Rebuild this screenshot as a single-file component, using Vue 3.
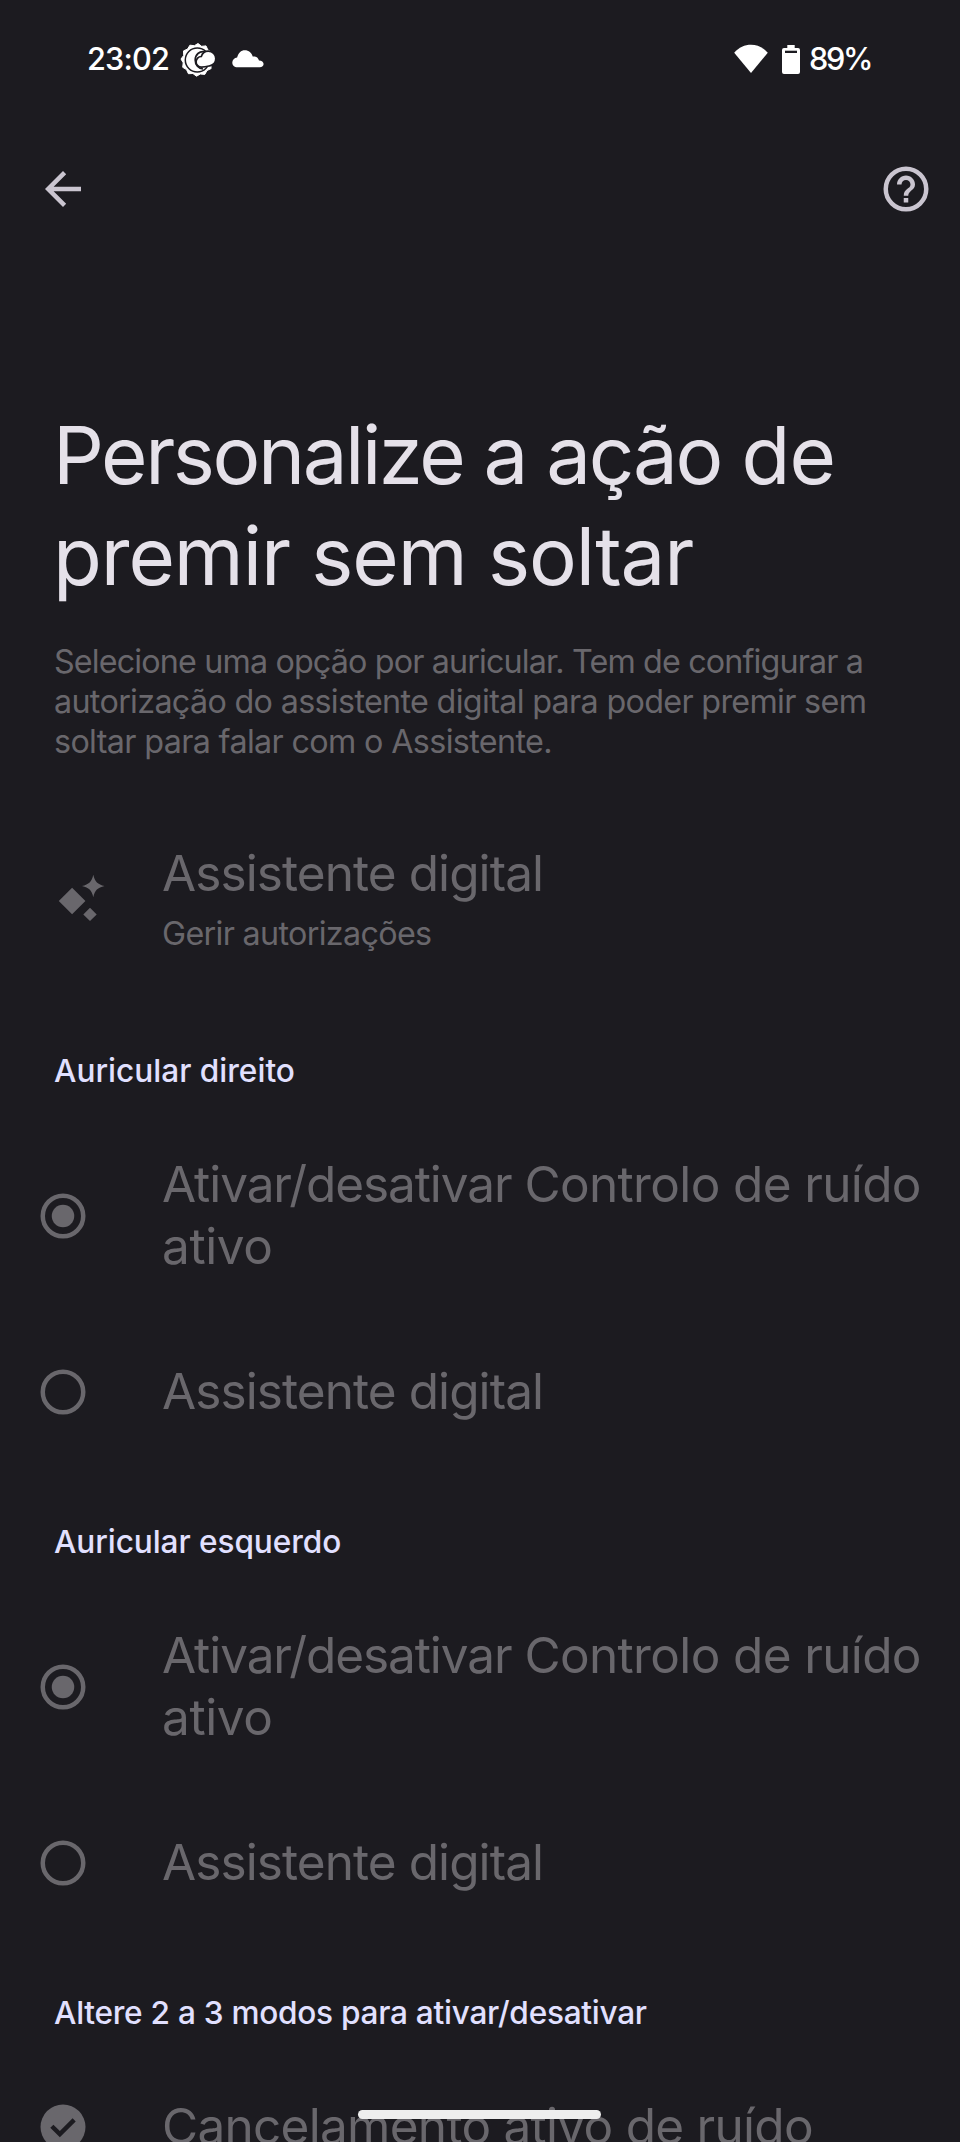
<script setup>
const one = (text, track) => [{ text, track }]
const title = [
  [{ text: 'Personalize ', track: -2.43 }, { text: 'a ação ', track: -2.2 }, { text: 'de', track: -0.8 }],
  one('premir sem soltar', -1.08),
]
const intro = [
  one('Selecione uma opção por auricular. Tem de configurar a', -0.86),
  one('autorização do assistente digital para poder premir sem', -0.68),
  one('soltar para falar com o Assistente.', -0.65),
]
const options = () => [
  {
    checked: true,
    lines: [
      [{ text: 'Ativar/desativar ', track: -1.08 }, { text: 'Controlo de ruído', track: -0.64 }],
      one('ativo', -0.4),
    ],
  },
  { checked: false, lines: [one('Assistente digital', -0.92)] },
]
const groups = [
  { name: 'Auricular direito', track: 0, options: options() },
  { name: 'Auricular esquerdo', track: -0.08, options: options() },
]
const tracking = (part) => ({ letterSpacing: part.track + 'px' })
</script>

<template>
  <div class="screen">
    <header class="status">
      <span class="clock">23:02</span>
      <svg class="weather" viewBox="0 0 36 36">
        <path fill="#fff" stroke="#fff" stroke-width="1" stroke-linejoin="round" d="M18 1.500 21.600 4.300 26 3.900 27.900 8 31.800 10.200 31.300 14.700 33.500 18.500 30.800 22.100 31.100 26.600 27 28.500 24.800 32.400 20.300 32 16.500 34.200 12.900 31.500 8.400 31.700 6.500 27.600 2.700 25.300 3.200 20.800 1 17 3.700 13.400 3.500 8.900 7.600 7 9.900 3.200 14.400 3.700Z" />
        <circle cx="17.300" cy="18" r="12" fill="none" stroke="#1c1b20" stroke-width="1.500" />
        <path fill="none" stroke="#1c1b20" stroke-width="1.700" d="M24.500 9.800c-5-1-9.300 2.800-9.300 8.200 0 5 3.300 8.700 7.800 9" />
        <path fill="#fff" stroke="#1c1b20" stroke-width="1.700" d="M21.500 25.100a5.300 5.300 0 0 1-.2-10.600c1-3.300 3.600-5.300 7-5.300 4.300 0 7.500 3.300 7.500 7.300s-2.700 6.500-6 7.300c-2 .5-4.300 1.300-8.300 1.300z" />
      </svg>
      <svg class="cloud" viewBox="0 0 32 18">
        <path fill="#fff" d="M5.500 17.300C2.300 17.300.3 15.300.3 12.500c0-2.700 2-4.600 4.800-5C6.300 2.800 9 .2 12.800.2c3.900 0 7 2.500 7.900 6.300 3-.6 5.700 1 6.300 4 2.700.2 4.600 1.500 4.600 3.600 0 2-1.500 3.200-3.900 3.200z" />
      </svg>
      <span class="spring"></span>
      <svg class="wifi" viewBox="0 0 34 30">
        <path fill="#fff" d="M17 29 L.2 8.800 C5 3.400 10.700.8 17 .8 S29 3.400 33.800 8.800Z" />
      </svg>
      <svg class="battery" viewBox="0 0 18 29">
        <path fill="#fff" d="M5.300 0h7.400v3H16a2 2 0 0 1 2 2v22a2 2 0 0 1-2 2H2a2 2 0 0 1-2-2V5a2 2 0 0 1 2-2h3.300z" />
        <path fill="#1c1b20" d="M3 5.700h12v2.300H3z" />
      </svg>
      <span class="percent">89%</span>
    </header>

    <nav class="bar">
      <svg class="icon" viewBox="0 0 24 24"><path fill="currentColor" d="M20 11H7.830l5.590-5.590L12 4l-8 8 8 8 1.410-1.410L7.830 13H20z" /></svg>
      <svg class="icon" viewBox="0 0 24 24">
        <circle cx="12" cy="12" r="9" fill="none" stroke="currentColor" stroke-width="2" />
        <path fill="currentColor" d="M11 16h2v2h-2zM12 6c-2.210 0-4 1.790-4 4h2c0-1.100.9-2 2-2s2 .9 2 2c0 2-3 1.750-3 5h2c0-2.250 3-2.500 3-5 0-2.210-1.790-4-4-4z" />
      </svg>
    </nav>

    <h1 class="title">
      <span v-for="(l, i) in title" :key="i" class="line"><span v-for="p in l" :key="p.text" :style="tracking(p)">{{ p.text }}</span></span>
    </h1>
    <p class="intro">
      <span v-for="(l, i) in intro" :key="i" class="line"><span v-for="p in l" :key="p.text" :style="tracking(p)">{{ p.text }}</span></span>
    </p>

    <div class="row assistant">
      <svg class="spark" viewBox="0 0 54 54">
        <path fill="currentColor" d="M14.100 15.700 27.400 29 14.100 42.300.8 29zM32 35.700l6.700 6.700L32 49.100l-6.700-6.700zM35.300 2.700c1.600 7 4.300 9.700 11.300 11.300-7 1.600-9.700 4.300-11.300 11.300-1.600-7-4.300-9.700-11.300-11.300 7-1.600 9.700-4.300 11.300-11.300z" />
      </svg>
      <div class="label">
        <span class="line assistant-name">Assistente digital</span>
        <span class="line assistant-sub">Gerir autorizações</span>
      </div>
    </div>

    <section v-for="g in groups" :key="g.name" class="group">
      <h2 class="heading" :style="tracking(g)">{{ g.name }}</h2>
      <div v-for="(o, i) in g.options" :key="i" class="row option">
        <svg class="icon" viewBox="0 0 24 24">
          <circle cx="12" cy="12" r="9" fill="none" stroke="currentColor" stroke-width="2" />
          <circle v-if="o.checked" cx="12" cy="12" r="5" fill="currentColor" />
        </svg>
        <div class="label">
          <span v-for="(l, n) in o.lines" :key="n" class="line"><span v-for="p in l" :key="p.text" :style="tracking(p)">{{ p.text }}</span></span>
        </div>
      </div>
    </section>

    <section class="group">
      <h2 class="heading modes">Altere 2 a 3 modos para ativar/desativar</h2>
      <div class="row option">
        <svg class="icon" viewBox="0 0 24 24">
          <circle cx="12" cy="12" r="10" fill="currentColor" />
          <path fill="#1c1b20" d="m10.600 16.600 7.050-7.050-1.400-1.400-5.650 5.650-2.850-2.850-1.400 1.400z" />
        </svg>
        <div class="label"><span class="line cancel">Cancelamento ativo de ruído</span></div>
      </div>
    </section>

    <div class="home"></div>
  </div>
</template>

<style>
html, body { background: #1c1b20; }
</style>

<style scoped>
.screen {
  position: relative;
  width: 960px;
  height: 2142px;
  overflow: hidden;
  background: #1c1b20;
  color: #69676c;
  font-family: Inter, Roboto, "Liberation Sans", sans-serif;
}
.line { display: block; white-space: pre; }
.label { margin: -1px 0 1px; }
.status {
  display: flex;
  align-items: center;
  height: 118px;
  box-sizing: border-box;
  padding: 0 88px;
  color: #fff;
  font-size: 30.700px;
  font-weight: 500;
}
.clock { width: 93px; margin: -1px 0 0 -1px; letter-spacing: -0.800px; }
.weather { width: 36px; height: 36px; margin-top: 1px; }
.cloud { width: 32px; height: 18px; margin-left: 16px; }
.spring { flex: 1; }
.wifi { width: 34px; height: 30px; margin-right: 14px; }
.battery { width: 18px; height: 29px; margin-right: 9px; }
.percent { width: 63px; margin-top: -1px; letter-spacing: -2.300px; white-space: nowrap; }
.bar {
  display: flex;
  justify-content: space-between;
  padding: 44px 27px 0 36px;
  color: #cac5d0;
}
.icon { width: 54px; height: 54px; flex: none; display: block; }
.title {
  margin: 189px 0 0 53px;
  color: #e5e1e9;
  font-size: 79.800px;
  line-height: 101px;
  font-weight: 400;
}
.intro { margin: 35px 0 0 54px; font-size: 32.300px; line-height: 40px; }
.row { display: flex; align-items: center; }
.assistant { margin-top: 81px; padding-left: 58px; }
.spark { width: 54px; height: 54px; margin-right: 50px; flex: none; }
.assistant-name { font-size: 49.500px; line-height: 62px; letter-spacing: -0.920px; }
.assistant-sub { margin-top: 10px; font-size: 32.300px; line-height: 40px; letter-spacing: -0.680px; }
.assistant .label { margin-bottom: 0; }
.group { margin-top: 99px; }
.assistant + .group { margin-top: 97px; }
.heading {
  margin: 0 0 63px 54px;
  color: #e1e0ff;
  font-size: 31.600px;
  line-height: 40px;
  font-weight: 500;
  white-space: nowrap;
}
.modes { letter-spacing: -0.270px; }
.option { padding-left: 36px; gap: 72px; font-size: 49.500px; line-height: 62px; }
.option + .option { margin-top: 83px; }
.cancel { letter-spacing: -0.720px; }
.home {
  position: absolute;
  left: 358px;
  top: 2110px;
  width: 243px;
  height: 9px;
  border-radius: 5px;
  background: #eeeeee;
}
</style>
